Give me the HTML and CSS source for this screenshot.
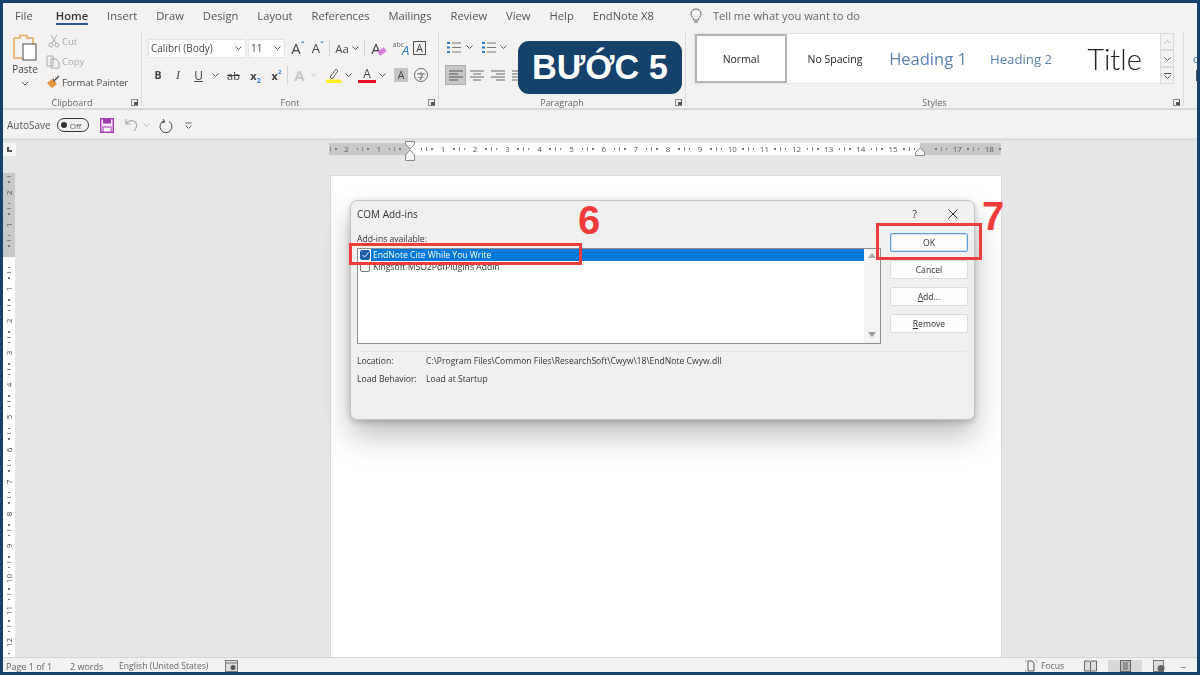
FILE: index.html
```html
<!DOCTYPE html>
<html lang="en">
<head>
<meta charset="utf-8">
<title>Word COM Add-ins</title>
<link rel="stylesheet" href="styles.css">
</head>
<body>
<div class="frame">
<div class="app">
  <nav class="tabs">
    <span class="tab">File</span><span class="tab t-home">Home</span><span class="tab">Insert</span><span class="tab">Draw</span><span class="tab">Design</span><span class="tab">Layout</span><span class="tab">References</span><span class="tab">Mailings</span><span class="tab">Review</span><span class="tab">View</span><span class="tab">Help</span><span class="tab">EndNote X8</span>
    <svg class="bulb" width="12" height="16" viewBox="0 0 12 16"><path d="M3.500 10.500C2 9.300 1 8 1 6a5 5 0 0 1 10 0c0 2-1 3.300-2.500 4.500V12h-5zM4 14h4" fill="none" stroke="#666" stroke-width="1"/></svg>
    <span class="tell">Tell me what you want to do</span>
  </nav>

  <section class="ribbon">
    <div class="group g-clip">
      <div class="g-body clip-body">
        <div class="paste">
          <svg width="26" height="28" viewBox="0 0 26 28"><path d="M2 4h6V1.500h7V4h6v6" fill="none" stroke="#e8a85c" stroke-width="1.500"/><path d="M2 4v20h8" fill="none" stroke="#e8a85c" stroke-width="1.500"/><rect x="11" y="10" width="13" height="16" fill="#fff" stroke="#666" stroke-width="1.200"/></svg>
          <span>Paste</span>
          <svg class="chev" width="8" height="5" viewBox="0 0 8 5"><path d="M1 1l3 3 3-3" fill="none" stroke="#555"/></svg>
        </div>
        <div class="clip-list">
          <div class="clip-item dim"><svg width="15" height="14" viewBox="0 0 15 14"><path d="M5 1l5 8M11 1L6 9" fill="none" stroke="#aaa"/><circle cx="5" cy="11" r="2" fill="none" stroke="#aaa"/><circle cx="11" cy="11" r="2" fill="none" stroke="#aaa"/></svg><span>Cut</span></div>
          <div class="clip-item dim"><svg width="15" height="14" viewBox="0 0 15 14"><path d="M1 1h6v10H1zM5 4h5l3 3v6H5z" fill="#f3f2f1" stroke="#aaa"/></svg><span>Copy</span></div>
          <div class="clip-item"><svg width="15" height="14" viewBox="0 0 15 14"><path d="M1 8l5-4 5 5-5 4z" fill="#e8913c"/><path d="M9 5l4-4M7 4l2 3" stroke="#444" stroke-width="1.300"/></svg><span>Format Painter</span></div>
        </div>
      </div>
      <div class="g-foot"><span>Clipboard</span><i class="launch"></i></div>
    </div>

    <div class="group g-font">
      <div class="g-body col">
        <div class="row r1">
          <span class="combo c-font">Calibri (Body)<svg width="7" height="4" viewBox="0 0 7 4"><path d="M.5.500l3 3 3-3" fill="none" stroke="#555"/></svg></span>
          <span class="combo c-size">11<svg width="7" height="4" viewBox="0 0 7 4"><path d="M.5.500l3 3 3-3" fill="none" stroke="#555"/></svg></span>
          <span class="ic w-grow">A<sup>ˆ</sup></span>
          <span class="ic w-shrink">A<sup>ˇ</sup></span>
          <i class="vsep"></i>
          <span class="ic w-aa">Aa<svg width="7" height="4" viewBox="0 0 7 4"><path d="M.5.500l3 3 3-3" fill="none" stroke="#555"/></svg></span>
          <i class="vsep"></i>
          <span class="ic w-clear">A<b class="eraser"></b></span>
          <span class="ic w-abc"><small>abc</small><em>A</em></span>
          <span class="ic w-box">A</span>
        </div>
        <div class="row r2">
          <span class="ic b w-b">B</span>
          <span class="ic i w-i">I</span>
          <span class="ic u w-u">U</span>
          <span class="ic w-ch1"><svg width="7" height="4" viewBox="0 0 7 4"><path d="M.5.500l3 3 3-3" fill="none" stroke="#555"/></svg></span>
          <span class="ic strike w-ab">ab</span>
          <span class="ic b w-x2">x<sub>2</sub></span>
          <span class="ic b w-x3">x<sup>2</sup></span>
          <i class="vsep"></i>
          <span class="ic w-fx">A</span>
          <span class="ic w-ch2"><svg width="7" height="4" viewBox="0 0 7 4"><path d="M.5.500l3 3 3-3" fill="none" stroke="#aaa"/></svg></span>
          <span class="ic w-hl"><svg width="15" height="16" viewBox="0 0 15 16"><path d="M4 10l6-8 2 2-6 8z" fill="none" stroke="#666"/><rect y="12.500" width="15" height="3.500" fill="#ffee22"/></svg></span>
          <span class="ic w-ch3"><svg width="7" height="4" viewBox="0 0 7 4"><path d="M.5.500l3 3 3-3" fill="none" stroke="#555"/></svg></span>
          <span class="ic w-col">A</span>
          <span class="ic w-ch4"><svg width="7" height="4" viewBox="0 0 7 4"><path d="M.5.500l3 3 3-3" fill="none" stroke="#555"/></svg></span>
          <span class="ic w-shade"><b>A</b></span>
          <span class="ic w-circ">字</span>
        </div>
      </div>
      <div class="g-foot"><span>Font</span><i class="launch"></i></div>
    </div>

    <div class="group g-para">
      <div class="g-body col">
        <div class="row p1">
          <svg width="14" height="13" viewBox="0 0 14 13"><path d="M0 2h3M0 6.500h3M0 11h3" stroke="#2a7cc7" stroke-width="2"/><path d="M5 2h9M5 6.500h9M5 11h9" stroke="#777"/></svg>
          <svg class="p-ch1" width="7" height="4" viewBox="0 0 7 4"><path d="M.5.500l3 3 3-3" fill="none" stroke="#555"/></svg>
          <svg class="p-num" width="14" height="13" viewBox="0 0 14 13"><path d="M0 2h3M0 6.500h3M0 11h3" stroke="#2a7cc7" stroke-width="2"/><path d="M5 2h9M5 6.500h9M5 11h9" stroke="#777"/></svg>
          <svg class="p-ch2" width="7" height="4" viewBox="0 0 7 4"><path d="M.5.500l3 3 3-3" fill="none" stroke="#555"/></svg>
        </div>
        <div class="row p2">
          <span class="al sel"><svg width="14" height="11" viewBox="0 0 14 11"><path d="M0 1h14M0 4h9M0 7h14M0 10h9" stroke="#555"/></svg></span>
          <span class="al"><svg width="14" height="11" viewBox="0 0 14 11"><path d="M0 1h14M3 4h8M0 7h14M3 10h8" stroke="#666"/></svg></span>
          <span class="al"><svg width="14" height="11" viewBox="0 0 14 11"><path d="M0 1h14M5 4h9M0 7h14M5 10h9" stroke="#666"/></svg></span>
          <span class="al"><svg width="14" height="11" viewBox="0 0 14 11"><path d="M0 1h14M0 4h14M0 7h14M0 10h14" stroke="#666"/></svg></span>
        </div>
      </div>
      <div class="g-foot"><span>Paragraph</span><i class="launch"></i></div>
    </div>

    <div class="group g-styles">
      <div class="g-body gallery-wrap">
        <div class="gallery">
          <div class="st st-normal">Normal</div>
          <div class="st st-nosp">No Spacing</div>
          <div class="st st-h1">Heading 1</div>
          <div class="st st-h2">Heading 2</div>
          <div class="st st-title">Title</div>
          <div class="gal-btns">
            <span><svg width="7" height="4" viewBox="0 0 7 4"><path d="M.5 3.500l3-3 3 3" fill="none" stroke="#bbb"/></svg></span>
            <span><svg width="7" height="4" viewBox="0 0 7 4"><path d="M.5.500l3 3 3-3" fill="none" stroke="#555"/></svg></span>
            <span><svg width="7" height="6" viewBox="0 0 7 6"><path d="M0 .5h7M.5 2.500l3 3 3-3" fill="none" stroke="#555"/></svg></span>
          </div>
        </div>
      </div>
      <div class="g-foot"><span>Styles</span><i class="launch"></i></div>
    </div>
    <div class="g-edit"><span class="edit-blue">c</span><i class="edit-bar"></i></div>
  </section>

  <div class="qat">
    <span class="autosave">AutoSave</span>
    <span class="toggle"><i></i>Off</span>
    <svg class="q-save" width="14" height="15" viewBox="0 0 14 15"><rect x=".7" y=".7" width="12.600" height="13.600" fill="#f3e3f5" stroke="#a23bb0" stroke-width="1.400"/><rect x="3" y="1" width="8" height="4.500" fill="#a23bb0"/><rect x="3" y="9" width="8" height="5" fill="#fff" stroke="#a23bb0"/></svg>
    <svg class="q-undo" width="14" height="14" viewBox="0 0 14 14"><path d="M1 1v5h5M1 6c2-3 5-4 8-3 3 2 4 6 0 10" fill="none" stroke="#aaa" stroke-width="1.100"/></svg>
    <svg class="q-ch" width="7" height="4" viewBox="0 0 7 4"><path d="M.5.500l3 3 3-3" fill="none" stroke="#bbb"/></svg>
    <svg class="q-redo" width="15" height="15" viewBox="0 0 15 15"><path d="M5 1l2 3-3 .5M6 3a6 6 0 1 0 5 .5" fill="none" stroke="#444" stroke-width="1"/></svg>
    <svg class="q-cust" width="7" height="7" viewBox="0 0 7 7"><path d="M.5 1h6M.5 3.500l3 3 3-3" fill="none" stroke="#666"/></svg>
  </div>

  <main class="workspace">
    <div class="hruler-row">
      <span class="corner"><i></i></span>
      <div class="hruler">
        <span class="cell"><u></u><i></i><b>2</b><i></i></span><span class="cell"><u></u><i></i><b>1</b><i></i></span><span class="cell"><u></u><i></i><b></b><i></i></span><span class="cell"><u></u><i></i><b>1</b><i></i></span><span class="cell"><u></u><i></i><b>2</b><i></i></span><span class="cell"><u></u><i></i><b>3</b><i></i></span><span class="cell"><u></u><i></i><b>4</b><i></i></span><span class="cell"><u></u><i></i><b>5</b><i></i></span><span class="cell"><u></u><i></i><b>6</b><i></i></span><span class="cell"><u></u><i></i><b>7</b><i></i></span><span class="cell"><u></u><i></i><b>8</b><i></i></span><span class="cell"><u></u><i></i><b>9</b><i></i></span><span class="cell"><u></u><i></i><b>10</b><i></i></span><span class="cell"><u></u><i></i><b>11</b><i></i></span><span class="cell"><u></u><i></i><b>12</b><i></i></span><span class="cell"><u></u><i></i><b>13</b><i></i></span><span class="cell"><u></u><i></i><b>14</b><i></i></span><span class="cell"><u></u><i></i><b>15</b><i></i></span><span class="cell"><u></u><i></i><b></b><i></i></span><span class="cell"><u></u><i></i><b>17</b><i></i></span><span class="cell"><u></u><i></i><b>18</b><i></i></span>
        <svg class="marker-l" width="10" height="20" viewBox="0 0 10 20"><path d="M.5.500h9V3L5 8 .5 3zM5 9l4.500 5v5.500H.5V14z" fill="#f6f6f6" stroke="#888"/></svg>
        <svg class="marker-r" width="10" height="9" viewBox="0 0 10 9"><path d="M5 .5l4.500 5v3H.5v-3z" fill="#f6f6f6" stroke="#888"/></svg>
      </div>
    </div>
    <div class="doc-row">
      <div class="vruler">
        <span class="cell"><u></u><i></i><b>2</b><i></i></span><span class="cell"><u></u><i></i><b>1</b><i></i></span><span class="cell"><u></u><i></i><b></b><i></i></span><span class="cell"><u></u><i></i><b>1</b><i></i></span><span class="cell"><u></u><i></i><b>2</b><i></i></span><span class="cell"><u></u><i></i><b>3</b><i></i></span><span class="cell"><u></u><i></i><b>4</b><i></i></span><span class="cell"><u></u><i></i><b>5</b><i></i></span><span class="cell"><u></u><i></i><b>6</b><i></i></span><span class="cell"><u></u><i></i><b>7</b><i></i></span><span class="cell"><u></u><i></i><b>8</b><i></i></span><span class="cell"><u></u><i></i><b>9</b><i></i></span><span class="cell"><u></u><i></i><b>10</b><i></i></span><span class="cell"><u></u><i></i><b>11</b><i></i></span><span class="cell"><u></u><i></i><b>12</b><i></i></span>
      </div>
      <div class="page"></div>
    </div>
  </main>

  <footer class="status">
    <span class="s-page">Page 1 of 1</span>
    <span class="s-words">2 words</span>
    <span class="s-lang">English (United States)</span>
    <svg class="s-macro" width="13" height="12" viewBox="0 0 13 12"><rect x=".5" y=".5" width="12" height="11" fill="#ddd" stroke="#777"/><path d="M.5 3h12" stroke="#777"/><circle cx="8" cy="7.500" r="2.500" fill="#555"/></svg>
    <svg class="s-focus" width="12" height="12" viewBox="0 0 12 12"><path d="M3 1h4l2 2v8H3z" fill="none" stroke="#555"/><path d="M0 3V0h2M12 3V0h-2M0 9v3h2" fill="none" stroke="#888" stroke-width=".8"/></svg>
    <span class="s-ftext">Focus</span>
    <svg class="s-read" width="13" height="12" viewBox="0 0 13 12"><path d="M.5 1h5l1 1 1-1h5v10h-5l-1 1-1-1h-5zM6.500 2v9" fill="#ddd" stroke="#666"/></svg>
    <span class="s-print"><svg width="11" height="12" viewBox="0 0 11 12"><rect x=".5" y=".5" width="10" height="11" fill="#bbb" stroke="#666"/><path d="M3 3h5M3 5h5M3 7h5M3 9h5" stroke="#666"/></svg></span>
    <svg class="s-web" width="12" height="12" viewBox="0 0 12 12"><rect x=".5" y=".5" width="10" height="11" fill="#ddd" stroke="#777"/><circle cx="8" cy="8.500" r="3.500" fill="#666"/></svg>
    <span class="s-minus">−</span>
  </footer>
</div>

<div class="dialog">
  <header class="d-title">
    <span class="d-name">COM Add-ins</span>
    <span class="d-help">?</span>
    <svg class="d-close" width="10" height="10" viewBox="0 0 10 10"><path d="M.5.500l9 9M9.500.500l-9 9" stroke="#333" stroke-width="1"/></svg>
  </header>
  <div class="d-main">
    <div class="d-left">
      <div class="d-lab">Add-ins available:</div>
      <div class="listbox">
        <div class="items">
          <div class="li on"><span class="cb"><svg width="7" height="6" viewBox="0 0 7 6"><path d="M.5 3l2 2 4-4.500" fill="none" stroke="#fff"/></svg></span><span class="li-t">EndNote Cite While You Write</span></div>
          <div class="li"><span class="cb"></span><span class="li-t">Kingsoft MSO2PdfPlugins Addin</span></div>
        </div>
        <div class="sb">
          <svg width="8" height="5" viewBox="0 0 8 5"><path d="M0 5l4-5 4 5z" fill="#aaa"/></svg>
          <svg width="8" height="5" viewBox="0 0 8 5"><path d="M0 0l4 5 4-5z" fill="#999"/></svg>
        </div>
      </div>
    </div>
    <div class="d-btns">
      <button class="btn ok">OK</button>
      <button class="btn">Cancel</button>
      <button class="btn"><u>A</u>dd...</button>
      <button class="btn"><u>R</u>emove</button>
    </div>
  </div>
  <div class="d-info">
    <div class="info-row"><span>Location:</span><span>C:\Program Files\Common Files\ResearchSoft\Cwyw\18\EndNote Cwyw.dll</span></div>
    <div class="info-row"><span>Load Behavior:</span><span>Load at Startup</span></div>
  </div>
</div>

<div class="badge">BƯỚC 5</div>
<div class="redbox rb-6"></div>
<div class="redbox rb-7"></div>
<div class="num n6">6</div>
<div class="num n7">7</div>
</div>
</body>
</html>
```
FILE: styles.css
```css
* { box-sizing: border-box; }
html, body { margin: 0; padding: 0; }
body { width: 1200px; height: 675px; overflow: hidden; font-family: "Open Sans", "Noto Sans", sans-serif; }
.frame { position: relative; width: 1200px; height: 675px; background: #15416a; padding: 3px; overflow: hidden; }
.app { width: 1194px; height: 669px; background: #f3f2f1; display: flex; flex-direction: column; overflow: hidden; color: #444; filter: blur(.4px); }

/* tabs */
.tabs { height: 25px; flex: none; display: flex; align-items: center; gap: 19px; padding-left: 12px; font-size: 11.200px; color: #555; }
.tab { display: block; line-height: 25px; position: relative; }
.t-home { color: #333; font-weight: 600; margin-left: 4px; }
.t-home::after { content: ""; position: absolute; left: 0; right: 0; bottom: 3px; height: 2px; background: #2b579a; }
.bulb { margin-left: 17px; flex: none; }
.tell { margin-left: -8px; color: #666; font-size: 11.200px; }

/* ribbon */
.ribbon { height: 82px; flex: none; display: flex; border-bottom: 2px solid #d8d8d8; overflow: hidden; }
.group { display: flex; flex-direction: column; border-right: 1px solid #dcdcdc; margin: 3px 0 2px; flex: none; }
.g-clip { width: 139px; } .g-font { width: 297px; } .g-para { width: 247px; } .g-styles { width: 498px; }
.g-body { flex: 1; min-height: 0; display: flex; }
.g-foot { height: 12px; flex: none; display: flex; align-items: center; justify-content: center; position: relative; font-size: 9px; color: #666; margin-bottom: -2px; }
.launch { position: absolute; right: 3px; top: 3px; width: 7px; height: 7px; border: 1px solid #888; border-right-color: #555; }
.launch::after { content: ""; position: absolute; right: 0; bottom: 0; width: 3px; height: 3px; background: #555; }
.col { flex-direction: column; }

.clip-body { padding: 3px 0 0 9px; }
.paste { width: 26px; display: flex; flex-direction: column; align-items: center; font-size: 10px; color: #444; }
.paste span { margin-top: 1px; line-height: 13px; }
.paste .chev { margin-top: 5px; }
.clip-list { margin-left: 8px; display: flex; flex-direction: column; gap: 4.500px; margin-top: -1px; }
.clip-item { display: flex; align-items: center; gap: 1px; height: 16px; font-size: 9.500px; color: #444; }
.clip-item.dim { color: #aaa; }
.clip-item svg { flex: none; }

.row { display: flex; align-items: center; flex: none; }
.r1 { height: 20px; margin: 7px 0 0 6px; }
.r2 { height: 20px; margin: 7px 0 0 6px; }
.ic { display: flex; align-items: center; justify-content: center; flex: none; height: 20px; font-size: 12px; color: #444; }
.combo { display: flex; align-items: center; justify-content: space-between; background: #fff; border: 1px solid #e3e3e3; height: 19px; font-size: 10px; padding: 0 3px 0 2px; color: #444; flex: none; }
.c-font { width: 98px; } .c-size { width: 37px; margin-left: 2px; }
.vsep { width: 1px; height: 18px; background: #d4d4d4; flex: none; }
.w-grow { width: 20px; margin-left: 3px; font-size: 15px; }
.w-shrink { width: 20px; font-size: 13px; margin-right: 1px; }
.ic sup { font-size: 8px; color: #2a7cc7; line-height: 1; margin-top: -7px; font-weight: 700; }
.w-aa { width: 34px; font-size: 11.500px; gap: 3px; }
.w-clear { width: 27px; font-size: 15px; }
.eraser { width: 8px; height: 5px; background: #d77fd8; transform: rotate(-35deg); margin: 7px 0 0 -3px; }
.w-abc { width: 18px; }
.w-abc small { font-size: 7px; margin-top: -7px; color: #666; }
.w-abc em { font-size: 13px; color: #2a7cc7; margin-left: -2px; margin-top: 3px; }
.w-box { width: 13px; height: 14px; border: 1px solid #555; margin-left: 3px; font-size: 10.500px; }
.b { font-weight: 700; }
.i { font-style: italic; font-family: "Liberation Serif", serif; }
.u { text-decoration: underline; }
.w-b { width: 20px; font-size: 10.500px; } .w-i { width: 20px; } .w-u { width: 21px; }
.w-ch1 { width: 13px; } .w-ab { width: 23px; font-size: 11px; } .strike { text-decoration: line-through; }
.w-x2 { width: 21px; font-size: 11px; } .w-x3 { width: 21px; font-size: 11px; }
.w-x2 sub { font-size: 7px; color: #2a7cc7; align-self: flex-end; }
.w-x3 sup { font-size: 6px; }
.w-fx { width: 23px; font-size: 15px; font-weight: 700; color: #c8c8c8; }
.w-ch2 { width: 5px; }
.w-hl { width: 22px; margin-left: 6px; }
.w-ch3 { width: 9px; }
.w-col { width: 18px; margin-left: 5px; font-size: 12px; height: 16px; border-bottom: 3px solid #e81123; }
.w-ch4 { width: 12px; }
.w-shade { width: 26px; }
.w-shade b { width: 14px; height: 14px; background: #c4c4c4; display: flex; align-items: center; justify-content: center; font-weight: 400; font-size: 10.500px; }
.w-circ { width: 14px; height: 14px; border: 1px solid #666; border-radius: 50%; font-size: 8px; font-family: "Noto Sans CJK SC", sans-serif; }

.p1 { margin: 9px 0 0 8px; height: 14px; }
.p-ch1 { margin-left: 5px; }
.p-num { margin-left: 9px; }
.p-ch2 { margin-left: 4px; }
.p2 { margin: 11px 0 0 6px; }
.al { width: 21px; height: 20px; display: flex; align-items: center; justify-content: center; flex: none; }
.al.sel { background: #c8c8c8; border: 1px solid #aaa; }

.gallery-wrap { padding: 2px 0 0 8px; }
.gallery { width: 480px; height: 51px; display: flex; background: #fff; border: 1px solid #e2e2e2; }
.st { display: flex; align-items: center; justify-content: center; flex: none; color: #222; height: 49px; }
.st-normal { width: 92px; border: 3px solid #fff; outline: 2px solid #b4b4b4; outline-offset: -2px; font-size: 10.500px; }
.st-nosp { width: 96px; font-size: 10.500px; }
.st-h1 { width: 90px; font-size: 16.500px; color: #5a7fb0; }
.st-h2 { width: 96px; font-size: 13.200px; color: #5a7fb0; }
.st-title { width: 91px; font-size: 29px; color: #222; font-family: Lato, sans-serif; font-weight: 300; }
.gal-btns { width: 14px; height: 51px; margin-top: -1px; display: flex; flex-direction: column; flex: none; }
.gal-btns span { height: 17px; display: flex; align-items: center; justify-content: center; border: 1px solid #d8d8d8; background: #f3f2f1; }
.g-edit { padding: 24px 0 0 9px; font-size: 11px; display: flex; flex-direction: column; align-items: flex-start; }
.edit-blue { color: #2a7cc7; line-height: 14px; }
.edit-bar { width: 6px; height: 11px; background: #555; margin: 4px 0 0 3px; }

/* qat */
.qat { height: 29px; flex: none; display: flex; align-items: center; border-bottom: 1px solid #e0e0e0; padding: 2px 0 0 4px; font-size: 10px; color: #555; box-shadow: 0 1px 2px rgba(0,0,0,.08); position: relative; }
.toggle { width: 32px; height: 14px; border: 1px solid #333; border-radius: 8px; margin-left: 6px; font-size: 8px; display: flex; align-items: center; gap: 3px; padding-left: 3px; color: #555; flex: none; }
.toggle i { width: 6px; height: 6px; background: #333; border-radius: 50%; }
.q-save { margin-left: 11px; }
.q-undo { margin-left: 11px; }
.q-ch { margin-left: 4px; }
.q-redo { margin-left: 8px; }
.q-cust { margin-left: 12px; }

/* workspace */
.workspace { flex: 1; min-height: 0; background: #e6e6e6; display: flex; flex-direction: column; overflow: hidden; }
.hruler-row { height: 36px; flex: none; display: flex; padding-top: 4px; }
.corner { width: 13px; height: 13px; background: #f6f6f6; display: flex; align-items: center; justify-content: center; flex: none; }
.corner i { width: 5px; height: 5px; border-left: 2px solid #555; border-bottom: 2px solid #555; }
.hruler { margin-left: 313px; width: 672px; height: 12px; display: flex; position: relative; background: linear-gradient(90deg, #c8c8c8 81px, #fff 81px, #fff 591px, #c8c8c8 591px); clip-path: inset(-4px 0 -9px 0); }
.cell { flex: none; width: 32.150px; display: flex; align-items: center; font-size: 8px; color: #555; }
.cell b { flex: 1; text-align: center; font-weight: 400; line-height: 1; }
.cell i { width: 1.500px; height: 1.500px; background: #777; margin: 0 4px; flex: none; }
.cell u { width: 1px; height: 4px; background: #888; flex: none; }
.hruler .cell:first-child { margin-left: 1px; }
.marker-l { position: absolute; left: 76px; top: -2px; }
.marker-r { position: absolute; left: 586px; top: 4px; }
.doc-row { flex: 1; min-height: 0; display: flex; }
.vruler { width: 12px; flex: none; display: flex; flex-direction: column; height: 484px; margin-top: -2px; background: linear-gradient(180deg, #c8c8c8 84px, #fff 84px); overflow: hidden; padding-top: 3px; }
.vruler .cell { width: 12px; height: 32.150px; flex-direction: column; }
.vruler .cell b { flex: 1; display: flex; align-items: center; justify-content: center; writing-mode: vertical-rl; transform: rotate(180deg); color: #444; }
.vruler .cell u { width: 4px; height: 1px; }
.vruler .cell i { margin: 4px 0; }
.page { width: 672px; height: 100%; margin-left: 315px; background: #fff; border: 1px solid #d8d8d8; border-bottom: 0; flex: none; }

/* status */
.status { height: 15px; flex: none; display: flex; align-items: center; background: #f3f2f1; border-top: 1px solid #d4d4d4; padding-top: 2px; font-size: 9px; color: #666; }
.s-page { margin-left: 3px; width: 64px; }
.s-words { width: 49px; }
.s-lang { width: 106px; font-size: 8.600px; }
.s-macro { flex: none; }
.s-focus { margin-left: 787px; flex: none; }
.s-ftext { margin-left: 4px; width: 32px; font-size: 8.600px; }
.s-read { margin-left: 11px; flex: none; }
.s-print { width: 34px; height: 13px; margin-left: 11px; background: #d8d8d8; display: flex; align-items: center; justify-content: center; flex: none; }
.s-web { margin-left: 11px; flex: none; }
.s-minus { margin-left: 15px; font-size: 11px; }

/* dialog */
.dialog { position: absolute; left: 350px; top: 200px; width: 625px; height: 220px; background: #f0f0f0; border: 1px solid #c4c4c4; border-radius: 7px; box-shadow: 0 16px 30px rgba(0,0,0,.26), 0 2px 6px rgba(0,0,0,.2); padding: 0 6px; font-size: 8.600px; color: #333; display: flex; flex-direction: column; filter: blur(.3px); }
.d-title { height: 25px; flex: none; display: flex; align-items: center; font-size: 10px; }
.d-name { flex: 1; }
.d-help { margin-right: 31px; font-size: 11px; }
.d-close { margin-right: 10px; }
.d-main { display: flex; height: 118px; flex: none; }
.d-left { width: 524px; flex: none; padding-top: 6px; }
.d-lab { height: 16px; line-height: 14px; }
.listbox { height: 96px; background: #fff; border: 1px solid #8f8f8f; display: flex; }
.items { flex: 1; }
.li { height: 12px; display: flex; align-items: center; padding-left: 2px; line-height: 12px; }
.cb { width: 10px; height: 10px; border: 1px solid #777; border-radius: 2px; background: #fff; flex: none; display: flex; align-items: center; justify-content: center; }
.on .cb { background: #1a5fa8; border-color: #1a5fa8; }
.li-t { flex: 1; padding-left: 2px; margin-left: 1px; height: 12px; white-space: nowrap; }
.on .li-t { background: #0078d7; color: #fff; }
.sb { width: 16px; flex: none; background: #f4f4f4; display: flex; flex-direction: column; align-items: center; justify-content: space-between; padding: 4px 0 6px; }
.d-btns { margin-left: 9px; width: 78px; flex: none; display: flex; flex-direction: column; padding-top: 7px; gap: 8px; }
.btn { height: 19px; padding: 0; background: #fdfdfd; border: 1px solid #dcdcdc; border-radius: 2px; font: inherit; color: #333; }
.btn.ok { border: 1px solid #5f9ed6; box-shadow: inset 0 0 0 1px #cfe3f5; }
.d-info { margin-top: 7px; border-top: 1px solid #e6e6e6; margin-right: 1px; }
.info-row { display: flex; height: 18px; align-items: center; }
.info-row span:first-child { width: 69px; flex: none; }

/* overlays */
.badge { position: absolute; left: 518px; top: 41px; width: 164px; height: 53px; border-radius: 11px; background: #15416a; color: #fff; font: 700 34.300px/52px "Liberation Sans", Arial, sans-serif; text-align: center; }
.redbox { position: absolute; border: 3px solid #ee3b3b; }
.rb-6 { left: 349px; top: 243px; width: 233px; height: 22px; }
.rb-7 { left: 876px; top: 223px; width: 106px; height: 37px; }
.num { position: absolute; color: #f23c3c; font: 700 40px/40px "Liberation Sans", Arial, sans-serif; }
.n6 { left: 578px; top: 200px; }
.n7 { left: 982px; top: 196px; }
```
